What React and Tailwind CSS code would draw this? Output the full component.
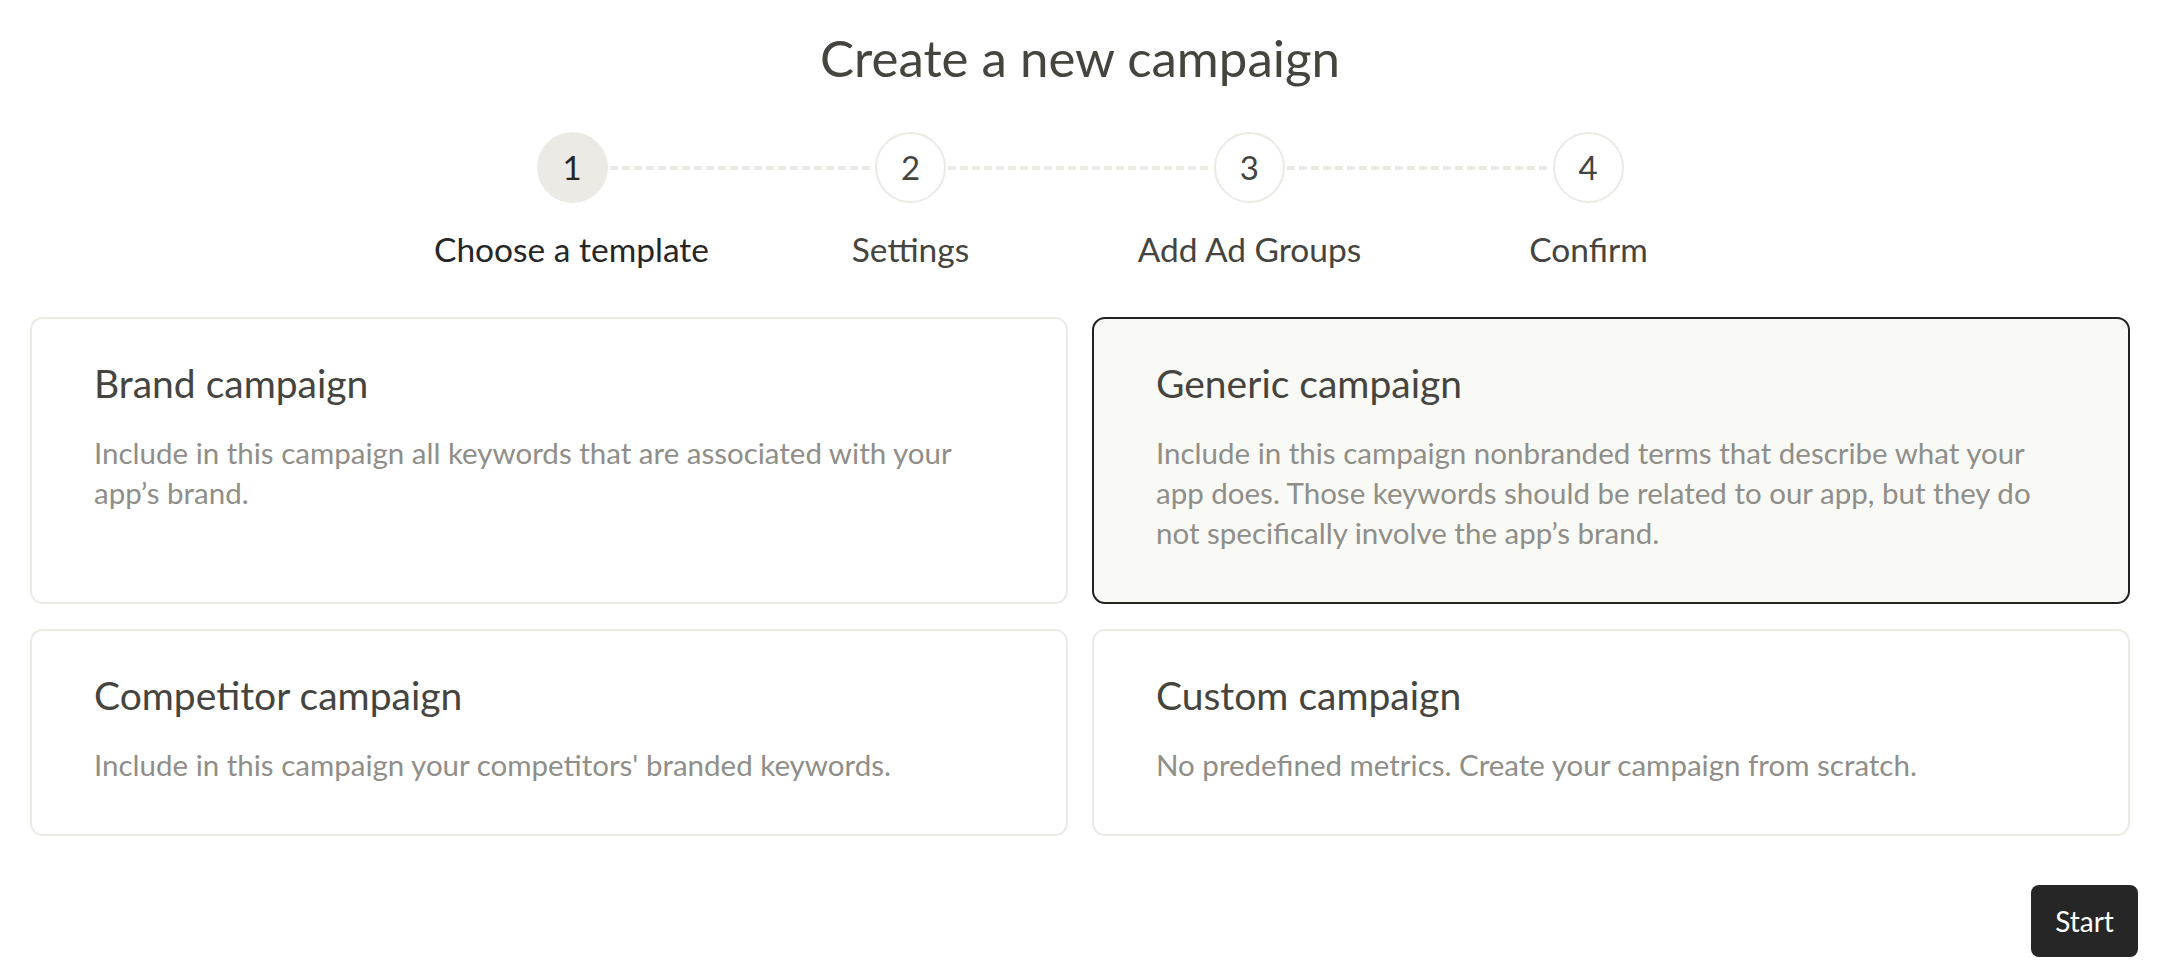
import React, { useState } from "react";

const steps = ["Choose a template", "Settings", "Add Ad Groups", "Confirm"];

const templates = [
  {
    id: "brand",
    title: "Brand campaign",
    text: "Include in this campaign all keywords that are associated with your app’s brand.",
  },
  {
    id: "generic",
    title: "Generic campaign",
    text: "Include in this campaign nonbranded terms that describe what your app does. Those keywords should be related to our app, but they do not specifically involve the app’s brand.",
  },
  {
    id: "competitor",
    title: "Competitor campaign",
    text: "Include in this campaign your competitors' branded keywords.",
  },
  {
    id: "custom",
    title: "Custom campaign",
    text: "No predefined metrics. Create your campaign from scratch.",
  },
];

const Stepper = ({ current }) => (
  <div className="mt-[44px]">
    <div className="mx-auto flex w-[1087px] items-center">
      {steps.map((label, i) => (
        <React.Fragment key={label}>
          {i > 0 && (
            <div className="mx-[2px] h-[4px] flex-1 bg-[repeating-linear-gradient(to_right,#ebeae5_0_8px,transparent_8px_12px)]"></div>
          )}
          <div
            className={
              i === current
                ? "flex h-[71px] w-[71px] items-center justify-center rounded-full bg-[#ebeae5] text-[33px] text-[#262626]"
                : "flex h-[71px] w-[71px] items-center justify-center rounded-full border-2 border-[#ebeae5] bg-white text-[33px] text-[#45443f]"
            }
          >
            {i + 1}
          </div>
        </React.Fragment>
      ))}
    </div>
    <div className="mx-auto mt-[26px] grid w-[1356px] grid-cols-4 text-center">
      {steps.map((label, i) => (
        <div
          key={label}
          className={
            i === current
              ? "text-[33.5px] leading-[40px] text-[#262626]"
              : "text-[33.5px] leading-[40px] text-[#45443f]"
          }
        >
          {label}
        </div>
      ))}
    </div>
  </div>
);

const TemplateCard = ({ item, selected, onClick }) => (
  <button
    onClick={onClick}
    className={
      selected
        ? "flex flex-col items-start justify-start rounded-[13px] border-2 border-[#222222] bg-[#f9f9f5] px-[62px] pt-[44px] pb-[49px] text-left"
        : "flex flex-col items-start justify-start rounded-[13px] border-2 border-[#ebeae5] bg-white px-[62px] pt-[44px] pb-[49px] text-left"
    }
  >
    <h3 className="text-[39px] leading-[40px] text-[#45443f]">{item.title}</h3>
    <p className="mt-[30px] text-[29.5px] leading-[40px] text-[#8f8e89]">{item.text}</p>
  </button>
);

export default function App() {
  const [selected, setSelected] = useState("generic");

  return (
    <div className="min-h-[978px] bg-white pt-[28px] font-['Lato',sans-serif]">
      <h1 className="text-center text-[51px] leading-[60px] text-[#45443f]">
        Create a new campaign
      </h1>

      <Stepper current={0} />

      {/* templates */}
      <div className="mt-[48px] grid grid-cols-2 items-stretch gap-x-[24px] gap-y-[25px] px-[30px]">
        {templates.map((t) => (
          <TemplateCard
            key={t.id}
            item={t}
            selected={selected === t.id}
            onClick={() => setSelected(t.id)}
          />
        ))}
      </div>

      <div className="mt-[49px] flex justify-end pr-[22px]">
        <button className="h-[72px] w-[107px] rounded-[8px] bg-[#262626] text-[28px] text-white">
          Start
        </button>
      </div>
    </div>
  );
}
